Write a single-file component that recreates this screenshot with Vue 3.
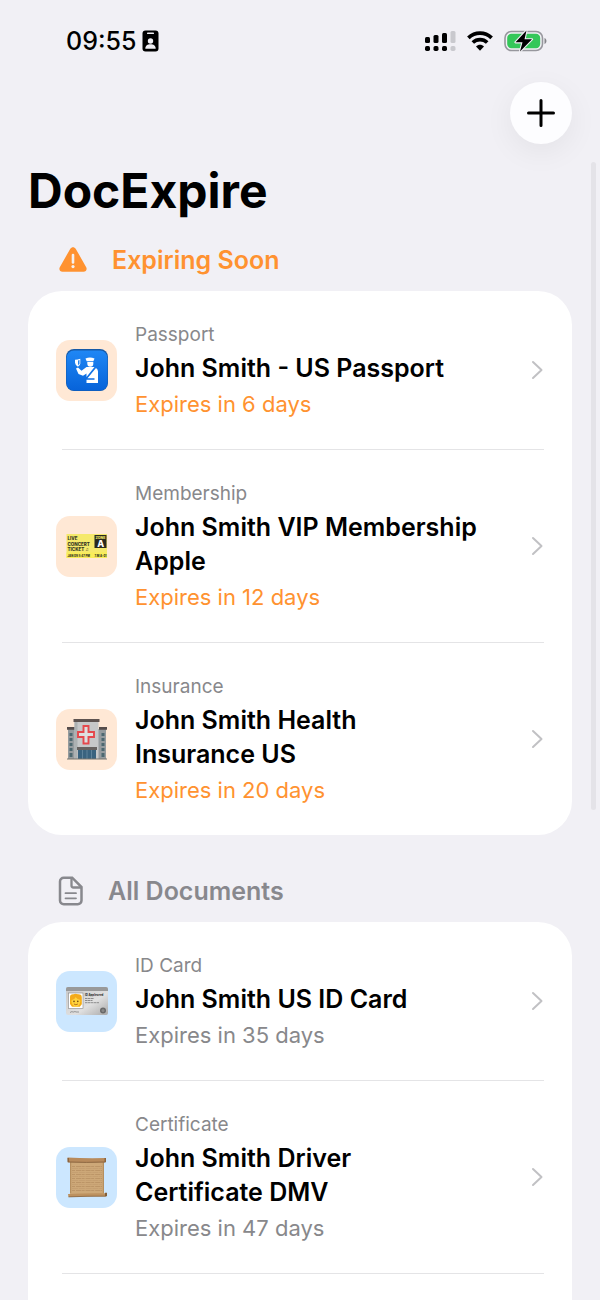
<script setup>
const sections = [
  {
    id: 'soon',
    title: 'Expiring Soon',
    items: [
      { icon: 'passport', type: 'Passport', name: 'John Smith - US Passport', days: 6 },
      { icon: 'ticket', type: 'Membership', name: 'John Smith VIP Membership Apple', days: 12 },
      { icon: 'hospital', type: 'Insurance', name: 'John Smith Health Insurance US', days: 20 },
    ],
  },
  {
    id: 'all',
    title: 'All Documents',
    items: [
      { icon: 'idcard', type: 'ID Card', name: 'John Smith US ID Card', days: 35 },
      { icon: 'scroll', type: 'Certificate', name: 'John Smith Driver Certificate DMV', days: 47 },
    ],
  },
]
</script>

<template>
  <div class="app">
    <div class="status">
      <div class="status-left">
        <span class="clock">09:55</span>
        <svg width="17" height="22" viewBox="0 0 17 22" aria-hidden="true">
          <rect x=".5" y=".5" width="16" height="21" rx="3" fill="#000" />
          <rect x="5" y="2.6" width="7" height="1.5" rx=".7" fill="#f1f0f5" />
          <circle cx="8.5" cy="11" r="2.7" fill="#f1f0f5" />
          <path d="M3.3 18.7c0-3 2.2-4.400 5.200-4.400s5.200 1.400 5.200 4.400z" fill="#f1f0f5" />
        </svg>
      </div>
      <div class="status-right">
        <svg width="31" height="22" viewBox="0 0 31 22" aria-hidden="true">
          <rect x="0" y="7" width="5" height="6" rx="1.500" />
          <rect x="8.500" y="5" width="5" height="8" rx="1.500" />
          <rect x="17" y="3" width="5" height="10" rx="1.500" />
          <rect x="25.500" y="1" width="5" height="12" rx="1.500" fill="#c9c9ce" />
          <rect x="0" y="16" width="5" height="5" rx="1.700" />
          <rect x="8.500" y="16" width="5" height="5" rx="1.700" />
          <rect x="17" y="16" width="5" height="5" rx="1.700" />
          <rect x="25.500" y="16" width="5" height="5" rx="1.700" fill="#c9c9ce" />
        </svg>
        <svg width="26" height="20" viewBox="0 0 26 20" aria-hidden="true">
          <path d="M1.400 6.800C8 .6 18 .6 24.600 6.800" fill="none" stroke="#000" stroke-width="3.800" />
          <path d="M5.800 11.500c4.200-3.900 10.200-3.900 14.400 0" fill="none" stroke="#000" stroke-width="3.700" />
          <path d="M9 15.500c2.300-2.200 5.700-2.200 8 0L13 19.700z" />
        </svg>
        <svg width="43" height="22" viewBox="0 0 43 22" aria-hidden="true">
          <rect x="1" y="1.500" width="37.500" height="19" rx="6.500" fill="none" stroke="#97979d" stroke-width="1.600" />
          <rect x="3.200" y="3.800" width="33" height="14.500" rx="4.200" fill="#34c759" />
          <path d="M40.500 8v6c2.600-.8 2.600-5.200 0-6z" fill="#85858a" />
          <path d="M22.500 0.500L11.500 12.300H18.500L16 21.500L28 9.300H20.500z" fill="#000" stroke="#f1f0f5" stroke-width="2.200" paint-order="stroke" stroke-linejoin="round" />
        </svg>
      </div>
    </div>

    <div class="toolbar">
      <button class="add" type="button" aria-label="Add document">
        <svg width="28" height="28" viewBox="0 0 28 28" aria-hidden="true">
          <path d="M14 1.500v25M1.500 14h25" stroke="#000" stroke-width="3" stroke-linecap="round" />
        </svg>
      </button>
    </div>

    <h1>DocExpire</h1>

    <section v-for="section in sections" :key="section.id" :class="['section', section.id]" :aria-labelledby="section.id">
      <h2 :id="section.id">
        <svg v-if="section.id === 'soon'" width="30" height="28" viewBox="0 0 30 28" aria-hidden="true">
          <path d="M12.300 2.700c1.200-2.100 4.200-2.100 5.400 0l10.500 18.500c1.200 2.100-.3 4.600-2.700 4.600H4.500c-2.400 0-3.900-2.500-2.700-4.600z" fill="#ff9230" />
          <path d="M15 9v7.500" stroke="#f5f1f0" stroke-width="2.600" stroke-linecap="round" />
          <circle cx="15" cy="20.600" r="1.600" fill="#f5f1f0" />
        </svg>
        <svg v-else width="26" height="30" viewBox="0 0 26 30" fill="none" stroke="#88888d" aria-hidden="true">
          <path d="M5.700 1.700h8.500L23.500 11v13.500a3.700 3.700 0 0 1-3.700 3.700H5.700A3.700 3.700 0 0 1 2 24.500V5.400a3.700 3.700 0 0 1 3.700-3.700z" stroke-width="2.500" />
          <path d="M13.500 2v7.500a2 2 0 0 0 2 2h7.500" stroke-width="2.300" />
          <path d="M7.500 17.200h10.500M7.500 22.300h10.500" stroke-width="1.800" stroke-linecap="round" />
        </svg>
        <span>{{ section.title }}</span>
      </h2>

      <ul class="card">
        <li v-for="item in section.items" :key="item.name">
          <button class="row" type="button">
            <span class="tile">
              <svg v-if="item.icon === 'passport'" width="44" height="44" viewBox="0 0 44 44" aria-hidden="true">
                <defs>
                  <linearGradient id="blue" x1="0" y1="0" x2="0" y2="1">
                    <stop offset="0" stop-color="#1f87f5" />
                    <stop offset="1" stop-color="#0763d9" />
                  </linearGradient>
                </defs>
                <rect x="1" y="1" width="42" height="42" rx="8" fill="#1559a8" />
                <rect x="1.500" y="2.500" width="41" height="40" rx="7.500" fill="url(#blue)" />
                <g fill="#fff">
                  <path d="M20.500 10.500q4.500-2 9 0l-1.200 2.800h-6.600z" />
                  <path d="M22.300 14h6v1.500a3 3.200 0 0 1-6 0z" />
                  <path d="M10 11.700q2.700-.2 5.300-1v5q-.6 2-2.400 3-2.600-1.500-2.900-4z" />
                  <path d="M11 20.500l2-1 3.500 3.300 5-3.800h8L21.500 29v-3.500l-3.500 2.200-4.500-1.700z" />
                  <path d="M31 20q2 1 2 3.500V35H21.500v-3.200h8v-1.500h-7z" />
                </g>
                <path d="M13 12.500l1.500-.4v3.500l-1.500 2z" fill="#2684ed" />
              </svg>

              <svg v-else-if="item.icon === 'ticket'" width="44" height="44" viewBox="0 0 44 44" font-family="Inter, sans-serif" font-weight="800" aria-hidden="true">
                <path d="M1.500 10H42v5l-.6.500.6.500v2l-.6.500.6.500v15H1.500z" fill="#f5e96b" />
                <path d="M1.500 28.500H42V34H1.500z" fill="#f9ed58" />
                <g fill="#343523">
                  <text x="2.500" y="16" font-size="4.500">LIVE</text>
                  <text x="2.500" y="21.500" font-size="4.500">CONCERT</text>
                  <text x="2.500" y="27" font-size="4.500">TICKET ♫</text>
                  <text x="2.500" y="32.500" font-size="2.800">JAN 09 8:47 PM</text>
                  <text x="29.500" y="32.500" font-size="2.800">7.M A-01</text>
                </g>
                <rect x="29.500" y="11" width="12" height="13" fill="#29291e" />
                <text x="30.500" y="14.500" font-size="3.500" fill="#f5e96b">ZONE</text>
                <text x="32.300" y="22.700" font-size="9" fill="#fff">A</text>
              </svg>

              <svg v-else-if="item.icon === 'hospital'" width="44" height="44" viewBox="0 0 44 44" aria-hidden="true">
                <path d="M3 12h9v30H3zM33 12h8v30h-8z" fill="#959b9e" />
                <path d="M2 10h9v2.700H2zM34 10h8v2.700h-8z" fill="#554c4b" />
                <path d="M9.500 4h24v38h-24z" fill="#c6c8c9" />
                <path d="M9.500 4h3v38h-3z" fill="#acb1b2" />
                <path d="M8.500 2h26v3h-26z" fill="#5d5350" />
                <g fill="#4d6870">
                  <path d="M4.500 16h3v3h-3zM4.500 21h3v3h-3zM4.500 26h3v3h-3zM4.500 31h3v3h-3zM4.500 36h3v4h-3z" />
                  <path d="M36.500 16h3v3h-3zM36.500 21h3v3h-3zM36.500 26h3v3h-3zM36.500 31h3v3h-3zM36.500 36h3v4h-3z" />
                </g>
                <path d="M18.500 9h5v6H29v5h-5.500v6.500h-5V20H13v-5h5.500z" fill="#dedfdf" stroke="#e5484c" stroke-width="1.900" />
                <path d="M12 30h20v3H12z" fill="#666260" />
                <path d="M13 33h18v9H13z" fill="#39637f" />
                <path d="M17.500 33v9M22 33v9M26.500 33v9" stroke="#6f91a8" stroke-width=".7" />
                <path d="M2 42h40" stroke="#77756f" />
              </svg>

              <svg v-else-if="item.icon === 'idcard'" width="44" height="44" viewBox="0 0 44 44" font-family="Inter, sans-serif" aria-hidden="true">
                <defs>
                  <linearGradient id="silver" x1="0" x2="1" y1="0" y2="1">
                    <stop offset="0" stop-color="#c7c7c7" />
                    <stop offset=".6" stop-color="#e0e0e0" />
                    <stop offset="1" stop-color="#a9a9a9" />
                  </linearGradient>
                </defs>
                <rect x="1" y="8" width="42" height="28" rx="2" fill="url(#silver)" />
                <path d="M1 12V10a2 2 0 0 1 2-2h38a2 2 0 0 1 2 2v2z" fill="#999" />
                <rect x="3.500" y="14" width="14.500" height="15.500" fill="#fff" stroke="#858585" stroke-width=".6" />
                <path d="M5 25V18q0-3 3.500-2.700 2-1.300 4.500 0 3.800-.3 3.800 3v7l-2 2.500H7z" fill="#f4ad17" />
                <ellipse cx="10.900" cy="22.200" rx="4.400" ry="5.500" fill="#ffd33d" />
                <path d="M6 21q3.800-.5 4.500-3 1.500 2.500 5.300 3V17l-4.500-1.500L6 17z" fill="#f3aa1b" />
                <circle cx="9" cy="22.400" r=".8" fill="#744811" />
                <circle cx="12.800" cy="22.400" r=".8" fill="#744811" />
                <path d="M8.900 25q2 1.500 4 0" fill="none" stroke="#a65c16" stroke-width=".8" />
                <text x="20" y="17" font-size="2.800" font-weight="800" fill="#333">ID Appleseed</text>
                <path d="M20 19.500h9M20 21.500h7.500M20 23.700h14" stroke="#777" stroke-width=".8" stroke-dasharray="2.500 .4" />
                <path d="M5 33.500l2-1 1 .7 2-.7 1 .5h3" fill="none" stroke="#777" stroke-width=".7" />
                <circle cx="38" cy="31.500" r="3" fill="#686868" />
                <circle cx="38" cy="31.500" r="1.500" fill="#888" />
              </svg>

              <svg v-else width="44" height="44" viewBox="0 0 44 44" aria-hidden="true">
                <path d="M5 5h34v34H5z" fill="#cda878" />
                <path d="M5 7h1.200v31H5zM37.800 7H39v31h-1.200z" fill="#b58f60" />
                <path d="M7 11.500h30M7 15.500h30M7 19.500h30M7 23.500h30M7 27.500h30M7 31.500h30M7 35.500h30" stroke="#b48d60" stroke-width=".7" stroke-dasharray="3 1 5 .6" />
                <path d="M7 13.500h30M7 17.500h30M7 21.500h30M7 25.500h30M7 29.500h30M7 33.500h30" stroke="#bd976a" stroke-width=".5" stroke-dasharray="6 .8" />
                <path d="M2.500 2.500Q20 3.500 40.500 3v4.300Q21 7.800 3 7.300z" fill="#b88a5b" />
                <path d="M3.500 7Q21 7.800 40 7" fill="none" stroke="#805c38" stroke-width=".8" />
                <path d="M2.500 3h1.500v4.300H2.500zM39.500 3H41v4.300h-1.500z" fill="#8b6540" />
                <path d="M3 39Q21 38 41 38.300v3.200Q22 41.200 3.500 42z" fill="#bd915f" />
                <path d="M3.500 41.900Q22 41 40.500 41.200" fill="none" stroke="#805c38" stroke-width=".7" />
                <path d="M40 37.800h2v3.500h-2z" fill="#83603a" />
              </svg>
            </span>

            <span class="info">
              <span class="type">{{ item.type }}</span>
              <span class="name">{{ item.name }}</span>
              <span class="expires">Expires in {{ item.days }} days</span>
            </span>

            <svg class="chevron" width="13" height="20" viewBox="0 0 13 20" aria-hidden="true">
              <path d="M2 2l8.500 8L2 18" fill="none" stroke="#c1c1c4" stroke-width="2" stroke-linecap="round" stroke-linejoin="round" />
            </svg>
          </button>
        </li>
      </ul>
    </section>
    <div class="scroll-thumb"></div>
  </div>
</template>

<style>
body {
  margin: 0;
  background: #f1f0f5;
}
</style>

<style scoped>
.app {
  position: relative;
  box-sizing: border-box;
  height: 100vh;
  overflow: hidden;
  display: flex;
  flex-direction: column;
  padding: 0 28px;
  background: #f1f0f5;
  color: #000;
  font-family: Inter, "Liberation Sans", sans-serif;
}
.status {
  display: flex;
  flex: none;
  align-items: center;
  justify-content: space-between;
  height: 82px;
  padding: 0 25px 0 38px;
}
.status-left {
  display: flex;
  align-items: center;
  gap: 6px;
}
.clock {
  font-size: 25px;
  line-height: 30px;
  font-weight: 500;
}
.status-right {
  display: flex;
  align-items: center;
  gap: 11px;
}
.toolbar {
  display: flex;
  flex: none;
  justify-content: flex-end;
}
.add {
  display: flex;
  align-items: center;
  justify-content: center;
  width: 62px;
  height: 62px;
  padding: 0;
  border: 0;
  border-radius: 50%;
  background: #fdfdff;
  box-shadow: 0 8px 30px rgba(0, 0, 0, 0.06);
}
h1 {
  flex: none;
  margin: 18px 0 9px;
  font-size: 48px;
  line-height: 58px;
  font-weight: 700;
}
.section {
  flex: none;
}
.all {
  display: flex;
  flex: 1;
  flex-direction: column;
  margin-top: 25px;
}
h2 {
  display: flex;
  align-items: center;
  gap: 24px;
  height: 62px;
  margin: 0;
  padding-left: 30px;
  font-size: 25px;
  font-weight: 600;
  color: #ff9230;
}
.all h2 {
  color: #88888d;
}
.card {
  margin: 0;
  padding: 0;
  list-style: none;
  background: #fff;
  border-radius: 34px;
}
.all .card {
  flex: 1;
  border-radius: 34px 34px 0 0;
}
.soon li + li::before,
.all li::after {
  content: "";
  display: block;
  height: 1px;
  margin: 0 28px 0 34px;
  background: #e4e4e6;
}
.row {
  display: flex;
  align-items: center;
  gap: 18px;
  width: 100%;
  padding: 30px 28px;
  border: 0;
  background: none;
  color: inherit;
  font: inherit;
  text-align: left;
}
.tile {
  display: flex;
  flex: none;
  align-items: center;
  justify-content: center;
  width: 61px;
  height: 61px;
  border-radius: 14px;
  background: #ffe8d5;
}
.all .tile {
  background: #cce7ff;
}
.info {
  display: flex;
  flex: 1;
  flex-direction: column;
}
.type {
  margin-bottom: 2px;
  font-size: 19px;
  line-height: 28px;
  color: #88888b;
}
.name {
  max-width: 344px;
  margin-bottom: 4px;
  font-size: 25px;
  line-height: 34px;
  font-weight: 600;
}
.expires {
  font-size: 22px;
  line-height: 30px;
  color: #ff9230;
}
.all .expires {
  color: #88888b;
}
.chevron {
  flex: none;
}
.scroll-thumb {
  position: absolute;
  top: 162px;
  right: 4px;
  width: 5px;
  height: 648px;
  border-radius: 3px;
  background: #e4e3e8;
}
</style>
